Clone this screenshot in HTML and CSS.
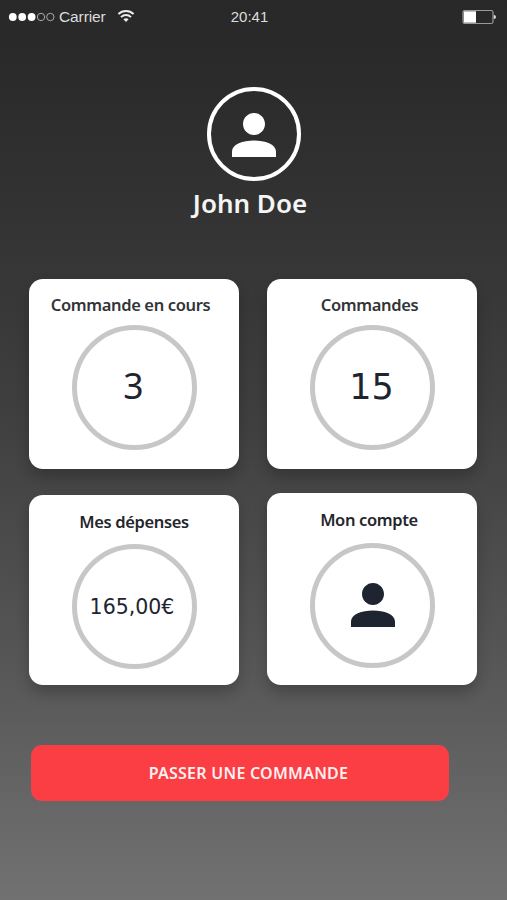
FILE: index.html
```html
<!DOCTYPE html>
<html lang="fr">
<head>
<meta charset="utf-8">
<meta name="viewport" content="width=device-width, initial-scale=1">
<title>Mon espace</title>
<link rel="stylesheet" href="styles.css">
</head>
<body>
<header class="status">
  <div class="network">
    <svg class="signal" viewBox="0 0 47 12" aria-hidden="true">
      <g fill="#fff"><circle cx="4.8" cy="6" r="3.9"/><circle cx="14.2" cy="6" r="3.9"/><circle cx="23.6" cy="6" r="3.9"/></g>
      <g fill="none" stroke="#aaa" stroke-width="1"><circle cx="33" cy="6" r="3.7"/><circle cx="42.3" cy="6" r="3.7"/></g>
    </svg>
    <span class="carrier">Carrier</span>
    <svg class="wifi" viewBox="0 0 18 14" aria-hidden="true">
      <g fill="none" stroke="#eee" stroke-width="2"><path d="M1.4 5C5.5.9 12.5.9 16.6 5"/><path d="M4 8.1C6.9 5.3 11.1 5.3 14 8.1"/></g>
      <path fill="#eee" d="M6.4 10.3Q9 8 11.6 10.3L9 13Z"/>
    </svg>
  </div>
  <time class="clock">20:41</time>
  <svg class="battery" viewBox="0 0 34 16" aria-hidden="true">
    <rect x="1" y="1.5" width="30" height="13" rx="1.8" fill="none" stroke="#999" stroke-width="1.2"/>
    <rect x="1.8" y="2.3" width="12.2" height="11.4" fill="#fff"/>
    <path d="M31.8 6Q34 6.2 34 8T31.8 10Z" fill="#ddd"/>
  </svg>
</header>
<main>
  <section class="profile">
    <div class="avatar">
      <svg class="person" viewBox="4 4 16 16" aria-hidden="true"><path fill="currentColor" d="M12 12c2.21 0 4-1.79 4-4s-1.79-4-4-4-4 1.79-4 4 1.79 4 4 4zm0 2c-4 0-8 1.34-8 4v2h16v-2c0-2.66-4-4-8-4z"/></svg>
    </div>
    <h1 class="name">John Doe</h1>
  </section>
  <section class="cards">
    <article class="card">
      <h2 class="title orders">Commande en cours</h2>
      <div class="ring"><span class="count single">3</span></div>
    </article>
    <article class="card">
      <h2 class="title total">Commandes</h2>
      <div class="ring"><span class="count">15</span></div>
    </article>
    <article class="card expenses">
      <h2 class="title dark">Mes dépenses</h2>
      <div class="ring"><span class="amount">165,00€</span></div>
    </article>
    <article class="card account">
      <h2 class="title dark">Mon compte</h2>
      <div class="ring"><svg class="person small" viewBox="4 4 16 16" aria-hidden="true"><path fill="currentColor" d="M12 12c2.21 0 4-1.79 4-4s-1.79-4-4-4-4 1.79-4 4 1.79 4 4 4zm0 2c-4 0-8 1.34-8 4v2h16v-2c0-2.66-4-4-8-4z"/></svg></div>
    </article>
  </section>
  <button class="order" type="button">PASSER UNE COMMANDE</button>
</main>
</body>
</html>
```

FILE: styles.css
```css
* { box-sizing: border-box; }
body {
  margin: 0;
  height: 900px;
  overflow: hidden;
  background: linear-gradient(#282828 0, #2c2c2c 100px, #3e3e3e 400px, #555 650px, #717171 900px);
  font-family: "Noto Sans", sans-serif;
}
.status {
  display: grid;
  grid-template-columns: 1fr auto 1fr;
  align-items: center;
  height: 33px;
  padding: 0 11px 0 8px;
  color: #ddd;
  font: 15.5px/20px "Liberation Sans", sans-serif;
}
.network { display: flex; align-items: center; }
.signal { width: 47px; height: 12px; }
.carrier { margin-left: 4px; letter-spacing: -.1px; }
.wifi { width: 18px; height: 14px; margin: -2px 0 0 11px; }
.clock { font-size: 15px; margin-right: 5px; }
.battery { width: 34px; height: 16px; justify-self: end; }
.profile {
  display: flex;
  flex-direction: column;
  align-items: center;
  height: 246px;
  padding-top: 54px;
  color: #fff;
}
.avatar {
  display: flex;
  align-items: center;
  justify-content: center;
  width: 94px;
  height: 94px;
  padding-top: 1px;
  border: 4px solid #fff;
  border-radius: 50%;
}
.person { width: 44px; height: 44px; }
.name {
  margin: 4px 7px 0 0;
  font-size: 26px;
  font-weight: 600;
  line-height: 36px;
  color: #f5f5f5;
}
.cards {
  display: grid;
  grid-template-columns: 210px 210px;
  grid-template-rows: 190px 192px;
  gap: 24px 28px;
  padding-left: 29px;
}
.card {
  display: flex;
  flex-direction: column;
  align-items: center;
  padding-top: 13px;
  border-radius: 14px;
  background: #fff;
  box-shadow: 0 8px 14px rgba(0, 0, 0, .22);
}
.expenses { margin-top: 2px; padding-top: 14px; }
.account { padding-top: 14px; }
.title {
  margin: 0 0 7px;
  font-size: 16.5px;
  font-weight: 600;
  line-height: 26px;
  letter-spacing: -.36px;
  color: #333438;
  white-space: nowrap;
}
.orders { padding-right: 7px; }
.total { padding-right: 5px; }
.dark { color: #24262c; }
.expenses .title { margin-bottom: 9px; }
.account .title { margin-bottom: 10px; padding-right: 6px; }
.ring {
  display: flex;
  flex: none;
  align-items: center;
  justify-content: center;
  width: 125px;
  height: 125px;
  border: 5px solid #c7c7c7;
  border-radius: 50%;
  color: #1f2530;
  font-family: "DejaVu Sans", sans-serif;
}
.count { font-size: 35px; line-height: 36px; padding: 0 1px 2px 0; }
.single { font: 35.5px/36px "Noto Sans", sans-serif; padding: 0 1px 5px 0; }
.amount { font-size: 20.5px; line-height: 24px; padding-right: 4px; }
.small { margin: -2px 0 0 2px; }
.order {
  display: block;
  width: 418px;
  height: 56px;
  margin: 60px 0 0 31px;
  padding: 0 0 0 17px;
  border: 0;
  border-radius: 11px;
  background: #fa3e44;
  color: #fff0f0;
  font: 600 16px/24px "Noto Sans", sans-serif;
  letter-spacing: .25px;
}
```
